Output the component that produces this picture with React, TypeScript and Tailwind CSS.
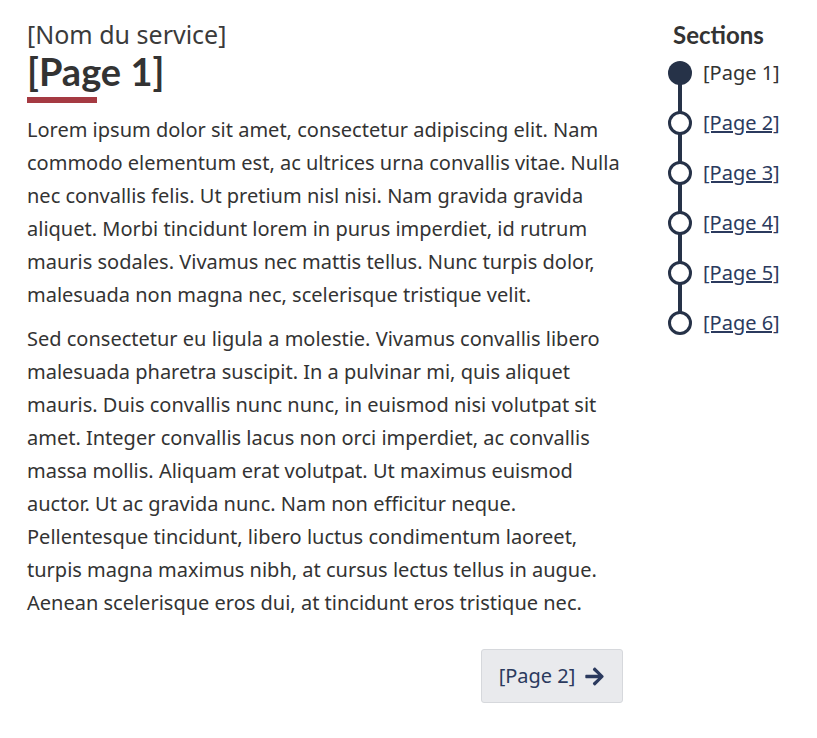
import React from "react";

const pages = ["[Page 1]", "[Page 2]", "[Page 3]", "[Page 4]", "[Page 5]", "[Page 6]"];

function ArrowRight() {
  return (
    <svg viewBox="0 0 448 512" width="21" height="21" fill="currentColor" aria-hidden="true">
      <path d="M190.5 66.9l22.2-22.2c9.4-9.4 24.6-9.4 33.9 0L441 239c9.4 9.4 9.4 24.6 0 33.9L246.6 467.3c-9.4 9.4-24.6 9.4-33.9 0l-22.2-22.2c-9.5-9.5-9.300-25 .4-34.3L311.4 296H24c-13.3 0-24-10.7-24-24v-32c0-13.3 10.7-24 24-24h287.4L190.9 101.2c-9.8-9.3-10-24.8-.4-34.3z" />
    </svg>
  );
}

export default function App() {
  return (
    <div className="min-h-[738px] bg-white text-[#333] [font-family:'Noto_Sans',sans-serif]">
      <div className="flex gap-[45px] pl-[27px] pt-[17px]">
        <main className="w-[596px] shrink-0">
          <div className="text-[25px] leading-[34px] text-[#3b3b3b]">[Nom du service]</div>
          <h1 className="text-[38px] leading-[40px] font-bold text-[#333] [font-family:Lato,sans-serif]">[Page 1]</h1>
          <div className="mt-[6px] h-[6px] w-[70px] bg-[#a53a42]" />
          <p className="mt-[10px] text-[20px] leading-[33px]">
            Lorem ipsum dolor sit amet, consectetur adipiscing elit. Nam commodo elementum est, ac ultrices urna convallis vitae. Nulla nec convallis felis. Ut pretium nisl nisi. Nam gravida gravida aliquet. Morbi tincidunt lorem in purus imperdiet, id rutrum mauris sodales. Vivamus nec mattis tellus. Nunc turpis dolor, malesuada non magna nec, scelerisque tristique velit.
          </p>
          <p className="mt-[11px] text-[20px] leading-[33px]">
            Sed consectetur eu ligula a molestie. Vivamus convallis libero malesuada pharetra suscipit. In a pulvinar mi, quis aliquet mauris. Duis convallis nunc nunc, in euismod nisi volutpat sit amet. Integer convallis lacus non orci imperdiet, ac convallis massa mollis. Aliquam erat volutpat. Ut maximus euismod auctor. Ut ac gravida nunc. Nam non efficitur neque. Pellentesque tincidunt, libero luctus condimentum laoreet, turpis magna maximus nibh, at cursus lectus tellus in augue. Aenean scelerisque eros dui, at tincidunt eros tristique nec.
          </p>
          <div className="mt-[30px] flex justify-end">
            <button className="flex h-[54px] w-[142px] items-center justify-center gap-[9px] rounded-[3px] border border-[#d6d8dc] bg-[#e9eaed] text-[20px] text-[#2b3a5e]">
              <span>[Page 2]</span>
              <ArrowRight />
            </button>
          </div>
        </main>
        <aside className="pt-[2px]">
          <h2 className="pl-[5px] text-[24px] leading-[32px] font-bold text-[#333] [font-family:Lato,sans-serif]">Sections</h2>
          <ul className="relative mt-[-3px]">
            <div className="absolute left-[10px] top-[25px] h-[250px] w-[4px] bg-[#263248]" />
            {pages.map((p, i) => (
              <li key={p} className="relative flex h-[50px] items-center gap-[11px]">
                {i === 0 ? (
                  <span className="h-[24px] w-[24px] rounded-full bg-[#263248]" />
                ) : (
                  <span className="h-[24px] w-[24px] rounded-full border-[3px] border-[#263248] bg-white" />
                )}
                {i === 0 ? (
                  <span className="text-[20px] leading-[24px] text-[#333]">{p}</span>
                ) : (
                  <a href="#" className="text-[20px] leading-[24px] text-[#2b3a5e] underline">{p}</a>
                )}
              </li>
            ))}
          </ul>
        </aside>
      </div>
    </div>
  );
}
